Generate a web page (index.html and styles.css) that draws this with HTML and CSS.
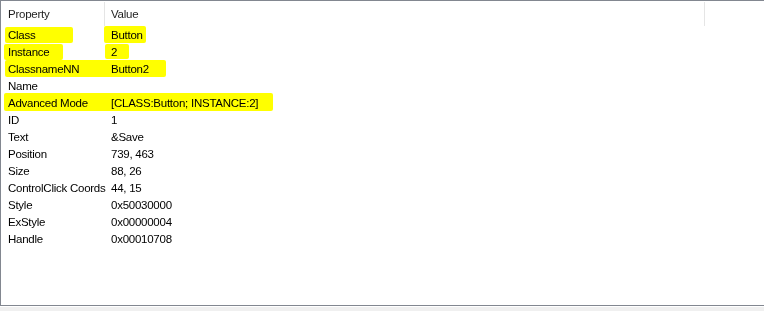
FILE: index.html
```html
<!DOCTYPE html>
<html>
<head>
<meta charset="utf-8">
<link rel="stylesheet" href="styles.css">
</head>
<body>
<div class="frame">
  <div class="list">
    <div class="head">
      <div class="hc c1">Property</div>
      <div class="hc c2">Value</div>
      <div class="hc c3"></div>
    </div>
    <div class="row"><div class="k">Class</div><div class="v">Button</div></div>
    <div class="row"><div class="k">Instance</div><div class="v">2</div></div>
    <div class="row"><div class="k">ClassnameNN</div><div class="v">Button2</div></div>
    <div class="row"><div class="k">Name</div><div class="v"></div></div>
    <div class="row"><div class="k">Advanced Mode</div><div class="v">[CLASS:Button; INSTANCE:2]</div></div>
    <div class="row"><div class="k">ID</div><div class="v">1</div></div>
    <div class="row"><div class="k">Text</div><div class="v">&amp;Save</div></div>
    <div class="row"><div class="k">Position</div><div class="v">739, 463</div></div>
    <div class="row"><div class="k">Size</div><div class="v">88, 26</div></div>
    <div class="row"><div class="k">ControlClick Coords</div><div class="v">44, 15</div></div>
    <div class="row"><div class="k">Style</div><div class="v">0x50030000</div></div>
    <div class="row"><div class="k">ExStyle</div><div class="v">0x00000004</div></div>
    <div class="row"><div class="k">Handle</div><div class="v">0x00010708</div></div>
    <div class="mark m1"></div>
    <div class="mark m2"></div>
    <div class="mark m3"></div>
    <div class="mark m4"></div>
    <div class="mark m5"></div>
    <div class="mark m6"></div>
  </div>
  <div class="strip"></div>
</div>
</body>
</html>
```
FILE: styles.css
```css
html, body {
  margin: 0;
  padding: 0;
  background: #ffffff;
}
body {
  width: 764px;
  height: 311px;
  overflow: hidden;
  font-family: "Liberation Sans", Arial, sans-serif;
  font-size: 11.5px;
  letter-spacing: -0.25px;
  color: #000000;
}
.frame {
  display: flex;
  flex-direction: column;
  height: 311px;
}
.list {
  position: relative;
  height: 304px;
  border-top: 1px solid #828790;
  border-left: 1px solid #828790;
  border-bottom: 1px solid #828790;
  background: #ffffff;
  isolation: isolate;
}
.strip {
  flex: 1;
  background: #f0f0f0;
  border-top: 1px solid #ffffff;
}
.head {
  display: flex;
  height: 25px;
  align-items: stretch;
}
.hc {
  display: flex;
  align-items: center;
  padding-left: 7px;
  box-sizing: border-box;
  color: #1e1e1e;
}
.c1 {
  width: 104px;
  border-right: 1px solid #e5e5e5;
  margin: 1px 0 0 0;
}
.c2 {
  width: 600px;
  padding-left: 6px;
  border-right: 1px solid #e5e5e5;
  margin-top: 1px;
}
.c3 {
  flex: 1;
}
.row {
  display: flex;
  height: 17px;
  align-items: center;
}
.k {
  width: 104px;
  padding-left: 7px;
  box-sizing: border-box;
  white-space: nowrap;
}
.v {
  padding-left: 6px;
  white-space: nowrap;
}
.mark {
  position: absolute;
  background: #ffff00;
  mix-blend-mode: multiply;
  border-radius: 2px;
}
.m1 { left: 4px; top: 26px; width: 68px; height: 16px; }
.m2 { left: 103px; top: 25px; width: 42px; height: 17px; }
.m3 { left: 3px; top: 43px; width: 59px; height: 16px; }
.m4 { left: 104px; top: 43px; width: 24px; height: 15px; }
.m5 { left: 4px; top: 59px; width: 161px; height: 17px; }
.m6 { left: 3px; top: 92px; width: 269px; height: 18px; }
```
